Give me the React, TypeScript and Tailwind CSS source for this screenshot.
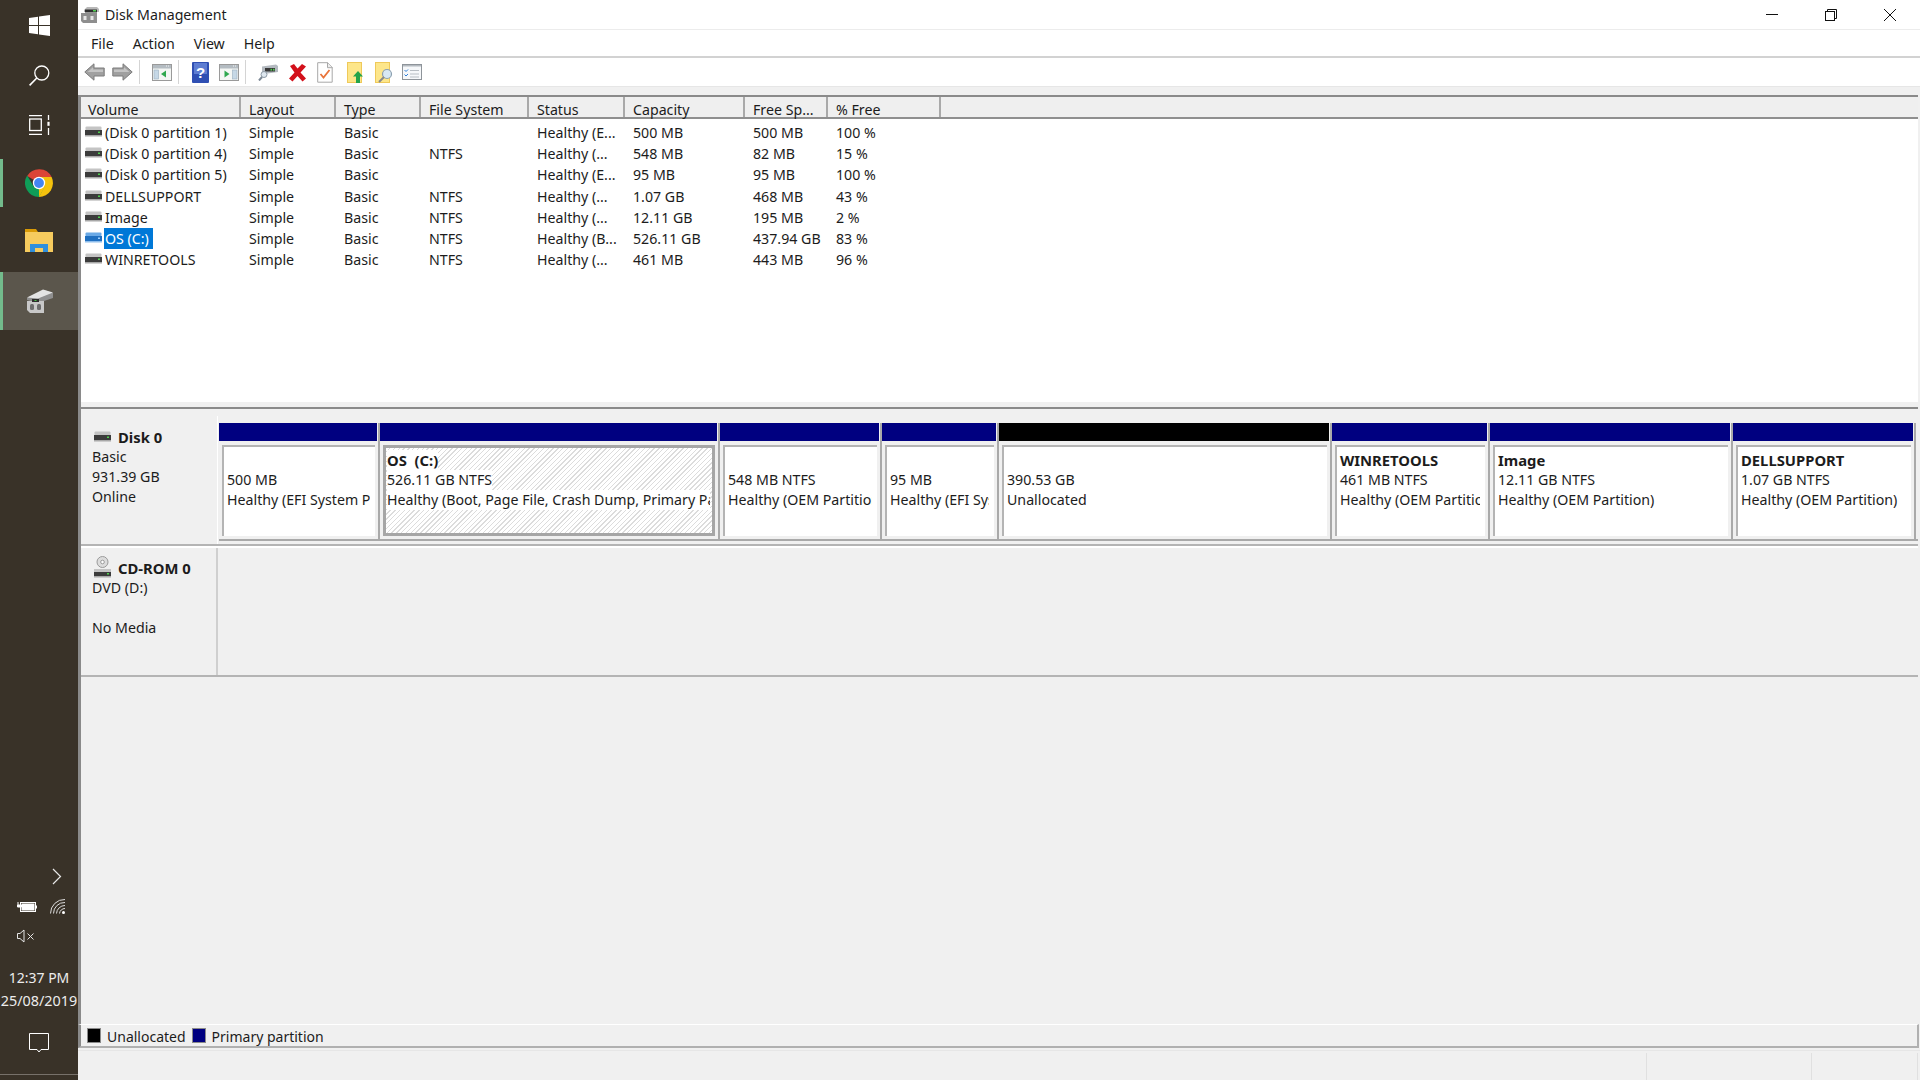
import React from 'react'

const font = { fontFamily: '"Noto Sans", sans-serif' }

const columns = [
  { title: 'Volume', w: 'w-[160px]' },
  { title: 'Layout', w: 'w-[95px]' },
  { title: 'Type', w: 'w-[85px]' },
  { title: 'File System', w: 'w-[108px]' },
  { title: 'Status', w: 'w-[96px]' },
  { title: 'Capacity', w: 'w-[120px]' },
  { title: 'Free Sp...', w: 'w-[83px]' },
  { title: '% Free', w: 'w-[113px]' },
]

const volumes = [
  ['(Disk 0 partition 1)', 'Simple', 'Basic', '', 'Healthy (E...', '500 MB', '500 MB', '100 %'],
  ['(Disk 0 partition 4)', 'Simple', 'Basic', 'NTFS', 'Healthy (...', '548 MB', '82 MB', '15 %'],
  ['(Disk 0 partition 5)', 'Simple', 'Basic', '', 'Healthy (E...', '95 MB', '95 MB', '100 %'],
  ['DELLSUPPORT', 'Simple', 'Basic', 'NTFS', 'Healthy (...', '1.07 GB', '468 MB', '43 %'],
  ['Image', 'Simple', 'Basic', 'NTFS', 'Healthy (...', '12.11 GB', '195 MB', '2 %'],
  ['OS (C:)', 'Simple', 'Basic', 'NTFS', 'Healthy (B...', '526.11 GB', '437.94 GB', '83 %'],
  ['WINRETOOLS', 'Simple', 'Basic', 'NTFS', 'Healthy (...', '461 MB', '443 MB', '96 %'],
]

const partitions = [
  { w: 'w-[161px]', name: '', size: '500 MB', status: 'Healthy (EFI System Partition)' },
  { w: 'w-[340px]', name: 'OS  (C:)', size: '526.11 GB NTFS', status: 'Healthy (Boot, Page File, Crash Dump, Primary Partition)', selected: true },
  { w: 'w-[162px]', name: '', size: '548 MB NTFS', status: 'Healthy (OEM Partition)' },
  { w: 'w-[117px]', name: '', size: '95 MB', status: 'Healthy (EFI System Partition)' },
  { w: 'w-[333px]', name: '', size: '390.53 GB', status: 'Unallocated', free: true },
  { w: 'w-[158px]', name: 'WINRETOOLS', size: '461 MB NTFS', status: 'Healthy (OEM Partition)' },
  { w: 'w-[243px]', name: 'Image', size: '12.11 GB NTFS', status: 'Healthy (OEM Partition)' },
  { w: 'w-[183px]', name: 'DELLSUPPORT', size: '1.07 GB NTFS', status: 'Healthy (OEM Partition)' },
]

function DriveIcon({ selected = false }: { selected?: boolean }) {
  return (
    <svg width="17" height="11" viewBox="0 0 17 11" className="shrink-0 mb-[2px]">
      <rect x="0.5" y="0.5" width="16" height="4" rx="1" fill={selected ? '#6aa9e6' : '#c4c4c4'} />
      <rect x="0" y="4" width="17" height="5" fill={selected ? '#1f6fc0' : '#3c3c3c'} />
      <rect x="13" y="5.5" width="2" height="1.5" fill={selected ? '#9fd0ff' : '#4fd04f'} />
      <rect x="0" y="9" width="17" height="1.5" fill={selected ? '#8dbdec' : '#a8a8a8'} />
    </svg>
  )
}

function SideIcons() {
  return (
    <div className="flex flex-col items-stretch">
      <div className="h-[50px] flex items-center justify-center">
        <svg width="21" height="21" viewBox="0 0 21 21" fill="#fff">
          <polygon points="0,3 9,1.7 9,10 0,10" />
          <polygon points="10,1.5 21,0 21,10 10,10" />
          <polygon points="0,11 9,11 9,19.3 0,18" />
          <polygon points="10,11 21,11 21,21 10,19.5" />
        </svg>
      </div>
      <div className="h-[50px] flex items-center justify-center">
        <svg width="21" height="21" viewBox="0 0 21 21" fill="none" stroke="#fff" strokeWidth="1.3">
          <circle cx="12.8" cy="8" r="7" />
          <line x1="7.8" y1="13" x2="0.6" y2="20.4" strokeWidth="1.6" />
        </svg>
      </div>
      <div className="h-[50px] flex items-center justify-center">
        <svg width="21" height="20" viewBox="0 0 21 20" fill="none" stroke="#fff" strokeWidth="1.3">
          <path d="M0 .7h13M0 19.3h13" />
          <rect x="0.7" y="4" width="11.6" height="11.5" />
          <path d="M19.5 0v5" />
          <rect x="18.4" y="6.8" width="2.2" height="4" fill="#fff" stroke="none" />
          <path d="M19.5 13v7" />
        </svg>
      </div>
      <div className="h-[9px]" />
      <div className="h-[48px] border-l-[3px] border-[#73bb8c] flex items-center justify-center pr-[3px]">
        <svg width="28" height="28" viewBox="0 0 28 28">
          <path d="M14 14 L2.2 7 A14 14 0 0 1 26.6 8 L14 8 Z" fill="#db4437" />
          <path d="M14 14 L14 8 L26.6 8 A14 14 0 0 1 14 28 Z" fill="#f4c20d" />
          <path d="M14 28 A14 14 0 0 1 2.2 6.6 L9 18 L14 14 Z" fill="#0f9d58" />
          <path d="M14 28 L20 17 L14 14 L9 18 Z" fill="#0f9d58" />
          <path d="M14 28 L20.4 17 L14 14 Z" fill="#f4c20d" />
          <circle cx="14" cy="14" r="6.2" fill="#fff" />
          <circle cx="14" cy="14" r="4.9" fill="#4285f4" />
        </svg>
      </div>
      <div className="h-[10px]" />
      <div className="h-[48px] flex items-center justify-center">
        <svg width="28" height="24" viewBox="0 0 28 24">
          <path d="M0 0h11l2 3H0z" fill="#d99a06" />
          <rect x="0" y="3" width="28" height="20" fill="#f6cb5e" />
          <path d="M5 23v-8h18v8h-5v-4h-8v4z" fill="#2f8fdc" />
        </svg>
      </div>
      <div className="h-[7px]" />
      <div className="h-[58px] border-l-[3px] border-[#73bb8c] bg-[#5b564c] flex items-center justify-center pr-[3px]">
        <svg width="27" height="25" viewBox="0 0 27 25">
          <path d="M1 9 L18 1 L27 4 L27 9 L12 14 L1 11 Z" fill="#8f8f8f" />
          <path d="M1 8.500 L17 0.500 L27 3.500 L12 9.500 Z" fill="#e4e4e4" />
          <path d="M1 12h17v12H4L1 21z" fill="#c8c8c8" />
          <rect x="6" y="10" width="7" height="3" fill="#2e2e2e" />
          <rect x="8.500" y="11" width="2" height="1" fill="#48c048" />
          <rect x="4" y="15" width="4" height="6" rx="1.500" fill="#6d6d6d" />
          <rect x="11" y="15" width="4" height="6" rx="1.500" fill="#6d6d6d" />
        </svg>
      </div>
    </div>
  )
}

function SideTray() {
  return (
    <div className="flex flex-col">
      <div className="h-[16px] flex justify-end pr-[16px] items-center">
        <svg width="10" height="17" viewBox="0 0 10 17" fill="none" stroke="#e8e8e8" strokeWidth="1.2">
          <path d="M1 1l7.5 7.5L1 16" />
        </svg>
      </div>
      <div className="h-[15px] mt-[15px] flex items-center justify-between pl-[17px] pr-[12px]">
        <svg width="20" height="12" viewBox="0 0 20 12" fill="none" stroke="#fff" strokeWidth="1">
          <path d="M1 1v3M3.5 1v3" />
          <path d="M0.5 4h4v2h-4z" fill="#fff" />
          <rect x="3.5" y="1.5" width="15" height="9" />
          <rect x="5" y="3" width="12" height="6" fill="#fff" />
          <rect x="18.5" y="4.5" width="1.5" height="3" fill="#fff" stroke="none" />
        </svg>
        <svg width="16" height="15" viewBox="0 0 16 15" fill="none" stroke="#ddd" strokeWidth="1">
          <path d="M.5 14.5A14 14 0 0 1 15 .5" />
          <path d="M3.5 14.5A11 11 0 0 1 15 3.5" />
          <path d="M6.5 14.5A8.5 8.5 0 0 1 15 6.5" />
          <path d="M9.5 14.5A5.5 5.5 0 0 1 15 9.5" />
          <circle cx="13.5" cy="13.5" r="1.5" fill="#fff" stroke="none" />
        </svg>
      </div>
      <div className="h-[14px] mt-[15px] pl-[17px] flex items-center">
        <svg width="18" height="14" viewBox="0 0 18 14" fill="none" stroke="#e4e4e4" strokeWidth="1">
          <path d="M.5 4.5h2.5L7 1v12L3 9.5H.5z" />
          <path d="M10.5 4.5l6 6M16.5 4.5l-6 6" />
        </svg>
      </div>
      <div className="mt-[23px] text-center text-[#ececec] text-[14px] leading-[23px] whitespace-nowrap">
        <div>12:37 PM</div>
        <div className="text-[14.4px]">25/08/2019</div>
      </div>
      <div className="mt-[21px] h-[21px] flex justify-center">
        <svg width="20" height="20" viewBox="0 0 20 20" fill="none" stroke="#fff" strokeWidth="1">
          <path d="M.5.5h19v16h-7.5L10 19l-2-2.500H.5z" />
        </svg>
      </div>
      <div className="mt-[20px] h-[1px] bg-[#77716a]" />
      <div className="h-[5px]" />
    </div>
  )
}

function ToolbarSep() {
  return <div className="w-[1px] h-[24px] bg-[#d4d4d4]" />
}

function Slot({ children, w = 'w-[28px]' }: { children: React.ReactNode; w?: string }) {
  return <div className={`${w} flex items-center justify-center shrink-0`}>{children}</div>
}

function Pane({ side }: { side: 'left' | 'right' }) {
  return (
    <svg width="20" height="17" viewBox="0 0 20 17">
      <rect x="0.5" y="0.5" width="19" height="16" fill="#f4f6f4" stroke="#9a9a9a" />
      <rect x="1" y="1" width="18" height="3.5" fill="#b4bcc2" />
      <path d="M14 2h1M16 2h1" stroke="#f4f4f4" />
      {side === 'left' ? (
        <>
          <rect x="2" y="6" width="4.500" height="9" fill="#c6d8e6" stroke="#9ab0c0" strokeWidth="0.6" />
          <path d="M14 6.500v7l-5-3.500z" fill="#2fa84f" />
        </>
      ) : (
        <>
          <rect x="13.500" y="6" width="4.500" height="9" fill="#c6d8e6" stroke="#9ab0c0" strokeWidth="0.6" />
          <path d="M5.500 6.500v7l5-3.500z" fill="#2fa84f" />
        </>
      )}
    </svg>
  )
}

function Toolbar() {
  return (
    <div className="h-[29px] bg-white flex items-center border-b border-[#e6e6e6] shrink-0 pl-[2px]">
      <Slot>
        <svg width="21" height="18" viewBox="0 0 21 18">
          <path d="M.8 9L10 .8V5h10.200v8H10v4.200z" fill="#a0a0a0" stroke="#7c7c7c" />
          <path d="M3.500 9L9 4.200v2.300h10V9z" fill="#c4c4c4" />
        </svg>
      </Slot>
      <Slot>
        <svg width="21" height="18" viewBox="0 0 21 18">
          <path d="M20.200 9L11 .8V5H.8v8H11v4.200z" fill="#a0a0a0" stroke="#7c7c7c" />
          <path d="M17.500 9L12 4.200v2.300H2V9z" fill="#c4c4c4" />
        </svg>
      </Slot>
      <div className="w-[3px]" />
      <ToolbarSep />
      <div className="w-[8px]" />
      <Slot><Pane side="left" /></Slot>
      <div className="w-[2px]" />
      <ToolbarSep />
      <div className="w-[7px]" />
      <Slot>
        <svg width="17" height="21" viewBox="0 0 17 21">
          <rect width="17" height="21" rx="1" fill="#2f4fb3" />
          <rect x="2" y="1" width="13" height="11" fill="#7f9de6" opacity=".6" />
          <text x="8.500" y="16" textAnchor="middle" fontSize="15" fontWeight="700" fill="#fff" fontFamily="Liberation Sans, sans-serif">?</text>
        </svg>
      </Slot>
      <div className="w-[1px]" />
      <Slot><Pane side="right" /></Slot>
      <div className="w-[2px]" />
      <ToolbarSep />
      <div className="w-[8px]" />
      <Slot>
        <svg width="20" height="17" viewBox="0 0 20 17">
          <path d="M4 2.500L18 0.500l2 1.500v6L6 10 4 8.500z" fill="#b4bac0" />
          <rect x="7" y="4" width="10" height="3.500" fill="#383838" />
          <rect x="12.500" y="4.800" width="1.500" height="1.800" fill="#50d050" />
          <rect x="15" y="4.800" width="1.500" height="1.800" fill="#50d050" />
          <circle cx="6" cy="10.500" r="3" fill="#dfe8f0" stroke="#8c98a4" />
          <path d="M4 13L1 16.500" stroke="#7b8794" strokeWidth="2" />
        </svg>
      </Slot>
      <div className="w-[1px]" />
      <Slot>
        <svg width="19" height="19" viewBox="0 0 19 19">
          <path d="M2 3l4-2 3.500 4.500L14 1l4 2.500-5.500 6L18 15.500 14.500 18.500 9.500 13 4.500 18.500 1 15.500l5.500-6z" fill="#d3111b" />
        </svg>
      </Slot>
      <Slot>
        <svg width="16" height="21" viewBox="0 0 16 21">
          <path d="M.7.7h10l4.500 4.500v15H.7z" fill="#fff" stroke="#a8a8a8" />
          <path d="M10.500.7v5h5" fill="#eee" stroke="#a8a8a8" />
          <path d="M3.500 12l3 3.500L12.500 8" fill="none" stroke="#e9743a" strokeWidth="1.800" />
        </svg>
      </Slot>
      <div className="w-[2px]" />
      <Slot>
        <svg width="17" height="21" viewBox="0 0 17 21">
          <rect x="0.500" y="0.500" width="14" height="20" fill="#fde68a" stroke="#efc95a" />
          <path d="M11 9l5 5.500h-3V21H9v-6.500H6z" fill="#24a44a" />
        </svg>
      </Slot>
      <div className="w-[1px]" />
      <Slot>
        <svg width="18" height="21" viewBox="0 0 18 21">
          <rect x="0.500" y="0.500" width="14" height="20" fill="#fde68a" stroke="#efc95a" />
          <circle cx="12" cy="12" r="4.500" fill="#d8e8f4" stroke="#8ca0b0" strokeWidth="1.200" />
          <path d="M9 15l-5 5" stroke="#8a8a8a" strokeWidth="2" />
        </svg>
      </Slot>
      <Slot>
        <svg width="20" height="16" viewBox="0 0 20 16">
          <rect x="0.500" y="0.500" width="19" height="15" fill="#f6f8fa" stroke="#8e949a" />
          <rect x="1" y="1" width="18" height="1.500" fill="#b4bac0" />
          <path d="M2.500 6l1.500 1.500 2-2M2.500 10.500l1.500 1.500 2-2" fill="none" stroke="#2f7fd8" />
          <path d="M8 6.500h9M8 10h9M8 13h9" stroke="#b8bec4" />
        </svg>
      </Slot>
    </div>
  )
}

function VolumeList() {
  return (
    <div className="h-[314px] shrink-0 border-l-[3px] border-t-2 border-b-2 border-[#8a8a8a] bg-white flex flex-col mr-[2px]">
      <div className="h-[22px] flex bg-[#efefef] border-b-2 border-[#8f8f8f] shrink-0">
        {columns.map((c, i) => (
          <div
            key={c.title}
            className={`${c.w} shrink-0 ${i === 0 ? 'pl-[7px]' : 'pl-[8px]'} border-r-[2px] border-[#a9a9a9] leading-[25px] text-[14.2px]`}
          >
            {c.title}
          </div>
        ))}
      </div>
      <div className="flex-1 pt-[3px]">
        {volumes.map(row => {
          const selected = row[0] === 'OS (C:)'
          return (
            <div key={row[0]} className="h-[21.2px] flex items-center text-[14.2px] leading-[21px] whitespace-nowrap">
              {row.map((cell, i) =>
                i === 0 ? (
                  <div key={i} className="w-[160px] shrink-0 flex items-center pl-[4px]">
                    <DriveIcon selected={selected} />
                    <span className={selected ? 'bg-[#0078d7] text-white ml-[2px] pl-[1px] pr-[4px] leading-[21px]' : 'ml-[3px]'}>{cell}</span>
                  </div>
                ) : (
                  <div key={i} className={`${columns[i].w} shrink-0 pl-[8px]`}>{cell}</div>
                )
              )}
            </div>
          )
        })}
      </div>
      <div className="h-[5px] bg-[#f0f0f0] shrink-0" />
    </div>
  )
}

function PartitionBox({ p }: { p: (typeof partitions)[number] }) {
  return (
    <div className={`${p.w} shrink-0 flex flex-col border-r-2 border-[#a9a9a9]`}>
      <div className={`h-[18px] mr-[1px] ${p.free ? 'bg-black' : 'bg-[#000080]'}`} />
      <div className="flex-1 pt-[4px] pl-[3px] pr-[3px] pb-[3px] flex min-h-0">
        {p.selected ? (
          <div className="flex-1 min-w-0 border-[3px] border-[#a6a6a6] pl-[1px] pt-[2px] bg-[repeating-linear-gradient(135deg,#ffffff_0,#ffffff_2.4px,#dcdcdc_2.4px,#dcdcdc_3.4px)] overflow-hidden whitespace-nowrap leading-[20px]">
            <div className="font-bold text-[14.8px] whitespace-pre w-fit bg-white">{p.name}</div>
            <div className="w-fit bg-white">{p.size}</div>
            <div className="bg-white overflow-hidden mr-[2px]">{p.status}</div>
          </div>
        ) : (
          <div className="flex-1 min-w-0 border-l-2 border-t-2 border-[#b4b4b4] bg-white pl-[3px] pt-[3px] overflow-hidden whitespace-nowrap leading-[20px]">
            <div className="font-bold text-[14.8px] h-[20px]">{p.name}</div>
            <div>{p.size}</div>
            <div className="overflow-hidden mr-[5px]">{p.status}</div>
          </div>
        )}
      </div>
    </div>
  )
}

function DiskArea() {
  return (
    <div className="flex-1 min-h-0 border-l-[3px] border-[#8a8a8a] flex flex-col pt-[7px] text-[14.2px] mr-[2px]">
      <div className="h-[130px] shrink-0 flex border-b-2 border-[#b4b4b4]">
        <div className="w-[137px] shrink-0 pl-[11px] pt-[11px] leading-[20px] border-r border-white">
          <div className="flex items-center gap-[7px] h-[20px] pl-[2px]">
            <DriveIcon />
            <span className="font-bold text-[14.8px]">Disk 0</span>
          </div>
          <div>Basic</div>
          <div>931.39 GB</div>
          <div>Online</div>
        </div>
        <div className="flex-1 flex flex-col pl-[1px]">
          <div className="h-[7px] shrink-0" />
          <div className="h-[118px] shrink-0 flex border-b-2 border-[#a9a9a9]">
            {partitions.map(p => <PartitionBox key={p.status + p.size} p={p} />)}
          </div>
        </div>
      </div>
      <div className="h-[131px] shrink-0 flex border-b-2 border-[#b4b4b4] border-t-2 border-t-white">
        <div className="w-[137px] shrink-0 pl-[11px] pt-[8px] leading-[20px] border-r-2 border-[#cfcfcf]">
          <div className="flex items-end gap-[7px] h-[22px] pl-[2px]">
            <svg width="17" height="22" viewBox="0 0 17 22" className="shrink-0">
              <circle cx="8.500" cy="6" r="5.500" fill="#dcdcdc" stroke="#9a9a9a" />
              <circle cx="8.500" cy="6" r="1.800" fill="#fff" stroke="#9a9a9a" />
              <rect x="0" y="13" width="17" height="3.500" fill="#c4c4c4" />
              <rect x="0" y="16" width="17" height="4" fill="#3c3c3c" />
              <rect x="13" y="17" width="2" height="1.500" fill="#4fd04f" />
              <rect x="0" y="20" width="17" height="1.500" fill="#a8a8a8" />
            </svg>
            <span className="font-bold text-[14.8px] leading-[20px]">CD-ROM 0</span>
          </div>
          <div>DVD (D:)</div>
          <div className="h-[20px]" />
          <div>No Media</div>
        </div>
      </div>
      <div className="flex-1" />
    </div>
  )
}

function Legend() {
  return (
    <div className="h-[24px] shrink-0 border-l-[3px] border-t border-t-white border-b-2 border-r-2 border-[#b0b0b0] border-l-[#8a8a8a] flex items-center pl-[6px] text-[14px] mr-[1px] gap-[6px] pt-[2px]">
      <span className="w-[14px] h-[15px] bg-black border border-[#8a8a8a] -mt-[2px]" />
      <span>Unallocated</span>
      <span className="w-[14px] h-[15px] bg-[#000080] border border-[#8a8a8a] -mt-[2px]" />
      <span>Primary partition</span>
    </div>
  )
}

function StatusBar() {
  return (
    <div className="h-[30px] mt-[2px] shrink-0 border-t border-[#e6e6e6] flex justify-end pt-[2px]">
      <div className="w-[166px] border-l border-r border-[#e0e0e0]" />
      <div className="w-[106px] border-r border-[#e0e0e0] mr-[2px]" />
    </div>
  )
}

export default function App() {
  return (
    <div className="w-[1920px] h-[1080px] flex overflow-hidden text-[#1c1c1c]" style={font}>
      <aside className="w-[78px] shrink-0 bg-[#393228] flex flex-col justify-between">
        <SideIcons />
        <SideTray />
      </aside>
      <main className="flex-1 min-w-0 bg-[#f0f0f0] flex flex-col">
        <div className="h-[30px] bg-white border-b border-[#ececec] flex items-center shrink-0">
          <svg width="18" height="16" viewBox="0 0 18 16" className="ml-[3px] mr-[4px]">
            <path d="M3 3L6 0h10l2 2v3H3z" fill="#b8b8b8" />
            <rect x="4" y="2.500" width="12" height="3" fill="#2e2e2e" />
            <rect x="12" y="3" width="3" height="1.500" fill="#50d050" />
            <path d="M0 6h16v10H2l-2-2z" fill="#8e8e8e" />
            <rect x="2.500" y="9" width="3" height="4" fill="#e6e6e6" />
            <rect x="9.500" y="9" width="3" height="4" fill="#e6e6e6" />
          </svg>
          <span className="text-[14.2px] ml-[2px]">Disk Management</span>
          <div className="ml-auto flex items-center">
            <Slot w="w-[58px]">
              <svg width="12" height="1" viewBox="0 0 12 1"><rect width="12" height="1" fill="#111" /></svg>
            </Slot>
            <Slot w="w-[59px]">
              <svg width="12" height="12" viewBox="0 0 12 12" fill="none" stroke="#111">
                <rect x="0.500" y="2.500" width="9" height="9" />
                <path d="M2.500 2.500V.5h9v9h-2" />
              </svg>
            </Slot>
            <Slot w="w-[60px]">
              <svg width="12" height="12" viewBox="0 0 12 12" fill="none" stroke="#111">
                <path d="M0 0l12 12M12 0L0 12" />
              </svg>
            </Slot>
          </div>
        </div>
        <div className="h-[28px] bg-white border-b-2 border-[#d2d2d2] flex items-center shrink-0 text-[14.2px] pt-[1px]">
          <span className="ml-[13px]">File</span>
          <span className="ml-[19px]">Action</span>
          <span className="ml-[19px]">View</span>
          <span className="ml-[19px]">Help</span>
        </div>
        <Toolbar />
        <div className="h-[8px] shrink-0" />
        <VolumeList />
        <DiskArea />
        <Legend />
        <StatusBar />
      </main>
    </div>
  )
}
